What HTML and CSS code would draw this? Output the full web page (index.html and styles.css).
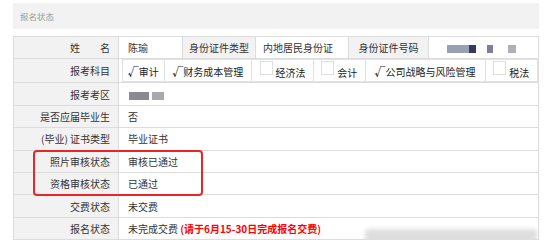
FILE: index.html
```html
<!DOCTYPE html>
<html lang="zh-CN">
<head>
    <meta charset="UTF-8">
    <title>报名状态</title>
    <link rel="stylesheet" href="styles.css">
</head>
<body>
    <div class="panel">
        <div class="panel-title">报名状态</div>

        <div class="info-wrap">
            <table class="info">
                <colgroup>
                    <col style="width:105px">
                    <col style="width:64px">
                    <col style="width:73px">
                    <col style="width:93px">
                    <col style="width:80px">
                    <col>
                </colgroup>
                <tr>
                    <th>姓&emsp;&emsp;名</th>
                    <td>陈瑜</td>
                    <td class="sub">身份证件类型</td>
                    <td class="id-type">内地居民身份证</td>
                    <td class="sub">身份证件号码</td>
                    <td class="masked">
                        <span class="dot d1"></span><span class="dot d2"></span><span class="dot d3"></span><span class="dot d4"></span>
                    </td>
                </tr>
                <tr>
                    <th>报考科目</th>
                    <td colspan="5" class="subjects-cell">
                        <table class="subjects">
                            <tr>
                                <td class="w43"><span class="tick">√</span>审计</td>
                                <td class="w87"><span class="tick">√</span>财务成本管理</td>
                                <td class="w62"><span class="box"></span>经济法</td>
                                <td class="w51"><span class="box"></span>会计</td>
                                <td class="w120"><span class="tick">√</span>公司战略与风险管理</td>
                                <td class="w52"><span class="box"></span>税法</td>
                            </tr>
                        </table>
                    </td>
                </tr>
                <tr>
                    <th>报考考区</th>
                    <td colspan="5" class="masked area"><span class="dot d6"></span><span class="dot d7"></span></td>
                </tr>
                <tr>
                    <th>是否应届毕业生</th>
                    <td colspan="5">否</td>
                </tr>
                <tr>
                    <th>(毕业) 证书类型</th>
                    <td colspan="5">毕业证书</td>
                </tr>
                <tr>
                    <th>照片审核状态</th>
                    <td colspan="5">审核已通过</td>
                </tr>
                <tr>
                    <th>资格审核状态</th>
                    <td colspan="5">已通过</td>
                </tr>
                <tr>
                    <th>交费状态</th>
                    <td colspan="5">未交费</td>
                </tr>
                <tr>
                    <th>报名状态</th>
                    <td colspan="5">未完成交费 <span class="warn">(请于6月15-30日完成报名交费)</span></td>
                </tr>
            </table>

            <!-- red frame around the two audit rows -->
            <div class="highlight"></div>
            <div class="watermark"></div>
        </div>
    </div>
</body>
</html>
```

FILE: styles.css
```css
/* Page */
body {
    margin: 0;
    background: #fff;
    font-family: "Microsoft YaHei", "Noto Sans CJK SC", sans-serif;
    color: #333;
}

.panel {
    padding: 3px 11px 0 13px;
}

/* Grey title bar */
.panel-title {
    background-color: #f2f2f2;
    color: #9a9a9a;
    font-size: 8.5px;
    height: 26px;
    line-height: 26px;
    padding-left: 7px;
}

.info-wrap {
    position: relative;
    margin-top: 7px;
}

/* Main info table */
.info {
    width: 100%;
    border-collapse: collapse;
    table-layout: fixed;
    font-size: 10px;
}

.info th,
.info td {
    border: 1px solid #dcdcdc;
    height: 21.4px;
    padding: 0;
    white-space: nowrap;
}

.info th {
    background-color: #f2f2f2;
    font-weight: normal;
    text-align: right;
    padding-right: 8px;
}

.info td {
    padding-left: 9px;
}

.info td.sub {
    background-color: #f2f2f2;
    text-align: center;
    padding-left: 0;
}

.info td.id-type {
    padding-left: 7px;
}

.info td.masked {
    padding-left: 18px;
}

.info td.masked.area {
    padding-left: 10px;
}

/* Blurred number / area */
.dot {
    display: inline-block;
    height: 8px;
    vertical-align: middle;
    filter: blur(0.6px);
}

.d1 { width: 22px; background: #9aa0b4; }
.d2 { width: 7px; background: #383a5c; }
.d3 { width: 6px; margin-left: 11px; background: #7c7e9c; }
.d4 { width: 8px; margin-left: 15px; background: #b0b0b8; }
.d6 { width: 20px; background: #8a8a90; }
.d7 { width: 12px; margin-left: 3px; background: #a8a8ae; }

/* Subjects row */
.info td.subjects-cell {
    padding: 0 0 0 3px;
}

.subjects {
    border-collapse: collapse;
    table-layout: fixed;
    font-size: 10px;
}

.subjects td {
    border: 1px solid #e2e2e2;
    height: 21px;
    padding: 0;
    text-align: center;
    color: #222;
}

.w43 { width: 41px; }
.w87 { width: 87px; }
.w62 { width: 62px; }
.w51 { width: 51px; }
.w120 { width: 120px; }
.w52 { width: 52px; }

.tick {
    font-weight: bold;
    font-size: 11px;
}

.box {
    display: inline-block;
    width: 11px;
    height: 12px;
    border: 1px solid #e0e0e0;
    margin-right: 3px;
    vertical-align: 2px;
}

.warn {
    color: #f00;
    font-weight: bold;
}

.highlight {
    position: absolute;
    left: 20px;
    top: 114px;
    width: 166px;
    height: 42px;
    border: 2px solid #e8262a;
    border-radius: 4px;
}

.watermark {
    position: absolute;
    left: 352px;
    top: 193px;
    width: 172px;
    height: 16px;
    background: #dedede;
    filter: blur(2px);
    border-radius: 4px;
}
```
